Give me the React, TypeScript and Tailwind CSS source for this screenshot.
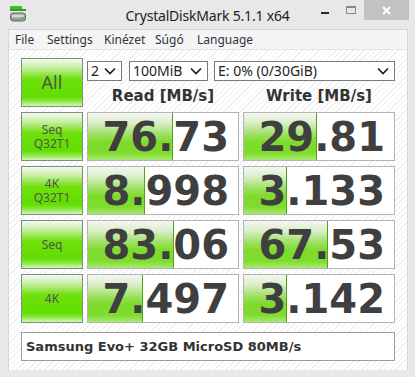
import React from 'react'

const ui = { fontFamily: '"Noto Sans", "Open Sans", sans-serif' }
const bold = { fontFamily: '"DejaVu Sans", Verdana, sans-serif' }

type Row = {
  top:    string
  bottom?: string
  read:   string
  readW:  number
  write:  string
  writeW: number
}

const rows: Row[] = [
  { top: 'Seq', bottom: 'Q32T1', read: '76.73', readW: 85, write: '29.81', writeW: 73 },
  { top: '4K',  bottom: 'Q32T1', read: '8.998', readW: 57, write: '3.133', writeW: 43 },
  { top: 'Seq',                  read: '83.06', readW: 86, write: '67.53', writeW: 84 },
  { top: '4K',                   read: '7.497', readW: 55, write: '3.142', writeW: 43 },
]

function Chevron() {
  return (
    <svg width="12" height="8" viewBox="0 0 12 8" className="shrink-0">
      <polyline points="1,1.5 6,6.5 11,1.5" fill="none" stroke="#1b1b1b" strokeWidth="1.6" />
    </svg>
  )
}

function Select({ value, className }: { value: string; className: string }) {
  return (
    <div
      className={`h-[20px] bg-white border border-[#7a7a7a] flex items-center justify-between pl-[3px] pr-[5px] text-[14px] text-[#1e1e1e] leading-none ${className}`}
      style={ui}
    >
      <span>{value}</span>
      <Chevron />
    </div>
  )
}

// green test button (All / Seq / 4K)
function GreenButton({ children, big }: { children: React.ReactNode; big?: boolean }) {
  return (
    <div
      className={`h-[49px] border border-[#7d8f7b] bg-[linear-gradient(to_bottom,#f5f9f1_0%,#c9efa6_18%,#6fe00c_42%,#62de00_80%,#8ee84a_90%,#d3f7b8_100%)] flex flex-col items-center justify-center text-[#4f554d] ${big ? 'text-[18px]' : 'text-[12px] leading-[14px]'}`}
      style={ui}
    >
      {children}
    </div>
  )
}

function ResultCell({ value, width }: { value: string; width: number }) {
  return (
    <div className="relative h-[49px] bg-white border border-[#b4b4b4] flex items-center justify-end pr-[9px]">
      {/* bar fill, sits under the number */}
      <div
        className="absolute left-0 top-0 bottom-0 border-r border-[#4ea21c] bg-[linear-gradient(to_bottom,#f4f6f2_0%,#dcefcc_20%,#9fe065_45%,#7edb2c_62%,#7fdc2e_85%,#a8ea70_100%)]"
        style={{ width }}
      />
      <span className="relative text-[40px] font-bold leading-none text-[#3f3f3f]" style={bold}>
        {value}
      </span>
    </div>
  )
}

function AppIcon() {
  return (
    <svg width="17" height="17" viewBox="0 0 17 17">
      <rect x="0" y="0" width="12" height="3" fill="#3fbf2a" />
      <rect x="0" y="3" width="16" height="2" fill="#2aa51a" />
      <rect x="0.5" y="7" width="15" height="8" rx="2.5" fill="#9a9a9a" stroke="#6b6b6b" />
      <rect x="2" y="8.5" width="12" height="3" rx="1" fill="#d5d5d5" />
      <rect x="11" y="11" width="2.5" height="2" fill="#3ac93a" />
    </svg>
  )
}

export default function App() {
  return (
    <div className="w-[415px] h-[377px] bg-[#e8e8e8] flex flex-col overflow-hidden">
      {/* TITLE BAR */}
      <div className="h-[29px] grid grid-cols-[1fr_auto_1fr] items-start shrink-0">
        <div className="pl-[10px] pt-[6px]">
          <AppIcon />
        </div>
        <div className="pt-[5px] text-[14px] text-[#222] tracking-[-0.2px]" style={ui}>
          CrystalDiskMark 5.1.1 x64
        </div>
        <div className="flex justify-end pr-[6px]">
          <div className="w-[26px] h-[20px] flex justify-center pt-[12px]">
            <div className="w-[8px] h-[2px] bg-[#2b2b2b]" />
          </div>
          <div className="w-[26px] h-[20px] flex justify-center pt-[6px]">
            <div className="w-[10px] h-[8px] border border-[#8a8a8a] border-t-2" />
          </div>
          <div className="w-[45px] h-[20px] bg-[#c2c2c2] flex items-center justify-center">
            <svg width="9" height="9" viewBox="0 0 9 9">
              <path d="M1 1 L8 8 M8 1 L1 8" stroke="#ffffff" strokeWidth="2" />
            </svg>
          </div>
        </div>
      </div>

      {/* CLIENT */}
      <div className="ml-[8px] mr-[7px] flex flex-col border-l border-t border-r border-[#d6d6d6] h-[341px]">
        {/* menu */}
        <div className="h-[20px] bg-[#f4f5f7] border-b border-[#e3e3e3] flex items-center text-[12px] text-[#333] pl-[6px]" style={ui}>
          <span className="w-[32px]">File</span>
          <span className="w-[57px]">Settings</span>
          <span className="w-[51px]">Kinézet</span>
          <span className="w-[42px]">Súgó</span>
          <span>Language</span>
        </div>

        {/* hatched body */}
        <div className="flex-1 bg-[repeating-linear-gradient(135deg,#ffffff_0px,#ffffff_3px,#efefef_3px,#efefef_4px)] pl-[12px] pt-[8px]">
          <div className="grid grid-cols-[62px_152px_152px] gap-x-[4px] gap-y-[5px]">
            <GreenButton big>All</GreenButton>

            <div className="col-span-2 flex flex-col">
              <div className="flex pt-[3px]">
                <Select value="2" className="w-[35px]" />
                <Select value="100MiB" className="w-[79px] ml-[7px]" />
                <Select value="E: 0% (0/30GiB)" className="w-[181px] ml-[6px]" />
              </div>
              <div className="grid grid-cols-[152px_152px] gap-x-[4px] pt-[8px] text-[15px] font-bold text-[#333] leading-none" style={bold}>
                <div className="text-center">Read [MB/s]</div>
                <div className="text-center">Write [MB/s]</div>
              </div>
            </div>

            {rows.map((r, i) => (
              <React.Fragment key={i}>
                <GreenButton>
                  <span>{r.top}</span>
                  {r.bottom && <span>{r.bottom}</span>}
                </GreenButton>
                <ResultCell value={r.read} width={r.readW} />
                <ResultCell value={r.write} width={r.writeW} />
              </React.Fragment>
            ))}

            <div
              className="col-span-3 mt-[4px] h-[29px] bg-white border border-[#9c9c9c] flex items-center pl-[4px] text-[13px] font-bold text-[#333]"
              style={bold}
            >
              Samsung Evo+ 32GB MicroSD 80MB/s
            </div>
          </div>
        </div>
      </div>
    </div>
  )
}
